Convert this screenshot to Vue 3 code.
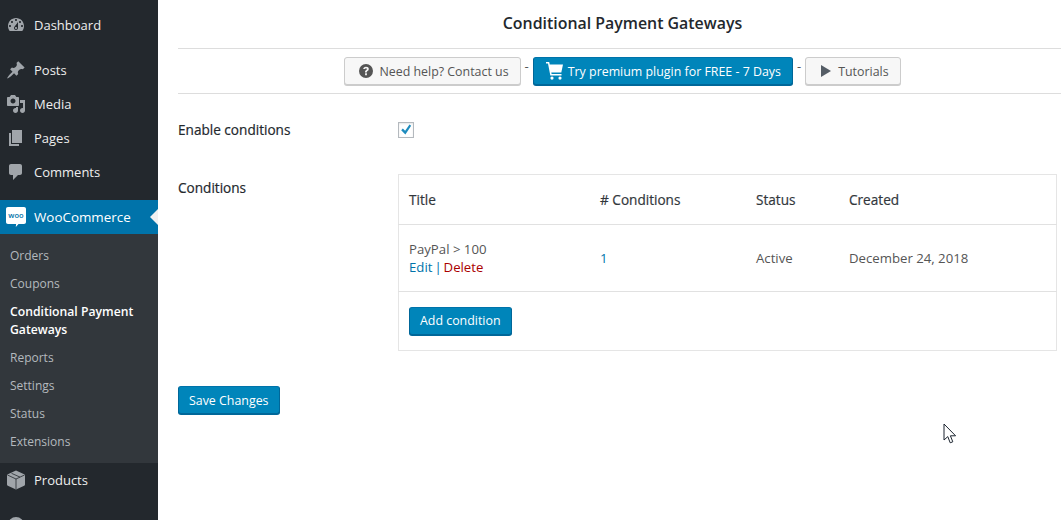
<script setup>
const menuTop = [
  { label: 'Dashboard', icon: 'dashboard', gap: true },
  { label: 'Posts', icon: 'pin' },
  { label: 'Media', icon: 'media' },
  { label: 'Pages', icon: 'pages' },
  { label: 'Comments', icon: 'comments', gap: true }
]

const icons = {
  dashboard: 'M3.76 16h12.48c1.1-1.37 1.76-3.11 1.76-5 0-4.42-3.58-8-8-8s-8 3.58-8 8c0 1.89.66 3.63 1.76 5zM10 4c.55 0 1 .45 1 1s-.45 1-1 1-1-.45-1-1 .45-1 1-1zM6 6c.55 0 1 .45 1 1s-.45 1-1 1-1-.45-1-1 .45-1 1-1zm8 0c.55 0 1 .45 1 1s-.45 1-1 1-1-.45-1-1 .45-1 1-1zm-5.37 5.55L12 7v6c0 1.1-.9 2-2 2s-2-.9-2-2c0-.57.24-1.08.63-1.45zM4 10c.55 0 1 .45 1 1s-.45 1-1 1-1-.45-1-1 .45-1 1-1zm12 0c.55 0 1 .45 1 1s-.45 1-1 1-1-.45-1-1 .45-1 1-1zm-5 3c0-.55-.45-1-1-1s-1 .45-1 1 .45 1 1 1 1-.45 1-1z',
  pin: 'M10.44 3.02l1.82-1.82 6.36 6.35-1.83 1.82c-1.05-.68-2.48-.57-3.41.36l-.75.75c-.92.93-1.04 2.35-.35 3.41l-1.83 1.82-2.41-2.41-2.8 2.79c-.42.42-3.38 2.71-3.8 2.29s1.86-3.39 2.28-3.81l2.79-2.79L4.1 9.36l1.83-1.82c1.05.69 2.48.57 3.4-.36l.75-.75c.93-.92 1.05-2.35.36-3.41z',
  media: 'M13 11V4c0-.55-.45-1-1-1h-1.67L9 1H5L3.67 3H2c-.55 0-1 .45-1 1v7c0 .55.45 1 1 1h10c.55 0 1-.45 1-1zM7 4.5c1.38 0 2.5 1.12 2.5 2.5S8.38 9.5 7 9.5 4.5 8.38 4.5 7 5.62 4.5 7 4.5zM14 6h5v10.5c0 1.38-1.12 2.5-2.5 2.5S14 17.88 14 16.5s1.12-2.5 2.5-2.5c.17 0 .34.02.5.05V9h-3V6zm-4 8.05V13h2v3.5c0 1.38-1.12 2.5-2.5 2.5S7 17.88 7 16.5 8.12 14 9.5 14c.17 0 .34.02.5.05z',
  pages: 'M6 15V2h10v13H6zm-1 1h8v2H3V5h2v11z',
  comments: 'M5 2h9c1.1 0 2 .9 2 2v7c0 1.1-.9 2-2 2h-2l-5 5v-5H5c-1.1 0-2-.9-2-2V4c0-1.1.9-2 2-2z',
  products: 'M10 0.500l8.200 3.800c.5.2.8.6.8 1.200v9c0 .6-.3 1-.8 1.200L10 19.500l-8.200-3.800c-.5-.2-.8-.6-.8-1.200v-9c0-.6.3-1 .8-1.200z'
}

const subMenu = [
  { label: 'Orders' },
  { label: 'Coupons' },
  { label: 'Conditional Payment Gateways', current: true },
  { label: 'Reports' },
  { label: 'Settings' },
  { label: 'Status' },
  { label: 'Extensions' }
]
</script>

<template>
  <div class="admin">
    <aside class="sidebar">
      <ul class="menu">
        <li v-for="item in menuTop" :key="item.label" class="menu-item" :class="{ gap: item.gap }">
          <svg class="menu-icon" viewBox="0 0 20 20"><path :d="icons[item.icon]" fill-rule="evenodd" /></svg>
          <span>{{ item.label }}</span>
        </li>
        <li class="menu-item active">
          <svg class="menu-icon" viewBox="0 0 20 20">
            <path d="M2 0h16c1.200 0 2 .8 2 2v13c0 1.200-.8 2-2 2h-5.500l-2.700 3 .3-3H2c-1.200 0-2-.8-2-2V2C0 .8.800 0 2 0z" fill="#fff" />
            <text x="10" y="11" class="woo-mark">woo</text>
          </svg>
          <span>WooCommerce</span>
        </li>
      </ul>
      <ul class="submenu">
        <li v-for="sub in subMenu" :key="sub.label" :class="{ current: sub.current }">{{ sub.label }}</li>
      </ul>
      <ul class="menu">
        <li class="menu-item gap">
          <svg class="menu-icon" viewBox="0 0 20 20">
            <path :d="icons.products" />
            <path d="M1.500 5l8.500 4 8.500-4M5.500 3.300l8.500 3.800M10 9v10" class="cube-lines" />
          </svg>
          <span>Products</span>
        </li>
        <li class="menu-item">
          <svg class="menu-icon" viewBox="0 0 20 20"><circle cx="10" cy="10" r="8" /></svg>
        </li>
      </ul>
    </aside>

    <main class="content">
      <h2 class="page-title">Conditional Payment Gateways</h2>
      <div class="toolbar">
        <a class="btn">
          <svg class="btn-icon" viewBox="0 0 16 16"><path fill-rule="evenodd" fill="#555" d="M8 1a7 7 0 1 1 0 14A7 7 0 0 1 8 1zm-.9 9.300v1.900h1.800v-1.900zM8 3.700c-1.600 0-2.700.9-2.800 2.400h1.800c.1-.6.4-.9 1-.9.500 0 .9.300.9.800 0 .4-.2.700-.7 1.100-.9.700-1.200 1.200-1.200 2.300v.1h1.800c0-.7.1-1 .8-1.500.8-.6 1.200-1.200 1.200-2.100 0-1.500-1.100-2.200-2.800-2.200z" /></svg>
          Need help? Contact us
        </a>
        <span class="dash">-</span>
        <a class="btn primary">
          <svg class="cart" viewBox="0 0 18 18"><path fill="#fff" d="M1 0h3.200l.5 2.500H18l-1.700 8H6.300l.3 1.500h9.900v1.600H5.300L3 1.600H1zM7 14.500a1.600 1.600 0 1 1 0 3.200 1.600 1.600 0 0 1 0-3.200zm8 0a1.600 1.600 0 1 1 0 3.200 1.600 1.600 0 0 1 0-3.200z" /></svg>
          Try premium plugin for FREE - 7 Days
        </a>
        <span class="dash">-</span>
        <a class="btn">
          <svg class="btn-icon play" viewBox="0 0 12 14"><path fill="#555d66" d="M1 1l10 6-10 6z" /></svg>
          Tutorials
        </a>
      </div>

      <div class="form-row enable-row">
        <label class="row-label">Enable conditions</label>
        <span class="checkbox">
          <svg viewBox="0 0 16 16"><path fill="#1e8cbe" d="M2.500 8.200l1.900-1.900 2.600 2.500 5-7 1.900 1.400-6.600 9.800z" /></svg>
        </span>
      </div>

      <div class="form-row conditions-row">
        <label class="row-label">Conditions</label>
        <table class="conditions">
          <thead>
            <tr>
              <th class="col-title">Title</th>
              <th class="col-count"># Conditions</th>
              <th class="col-status">Status</th>
              <th>Created</th>
            </tr>
          </thead>
          <tbody>
            <tr>
              <td>
                <div>PayPal &gt; 100</div>
                <div class="row-actions"><a class="link">Edit</a> <span class="link">|</span> <a class="delete">Delete</a></div>
              </td>
              <td class="link">1</td>
              <td>Active</td>
              <td>December 24, 2018</td>
            </tr>
          </tbody>
          <tfoot>
            <tr>
              <td colspan="4"><a class="btn primary">Add condition</a></td>
            </tr>
          </tfoot>
        </table>
      </div>

      <a class="btn primary save">Save Changes</a>
    </main>

    <svg class="cursor" viewBox="0 0 14 21" width="14" height="21">
      <path d="M1 1V17L4.800 13.600 7.200 19.800 9.800 18.800 7.400 12.800H12.600Z" fill="#fff" stroke="#1c2530" stroke-width="1" />
    </svg>
  </div>
</template>

<style>
html, body {
  margin: 0;
  background: #fff;
  overflow: hidden;
}
</style>

<style scoped>
.admin {
  display: flex;
  width: 1061px;
  height: 520px;
  overflow: hidden;
  position: relative;
  font-family: "Open Sans", "Liberation Sans", sans-serif;
  font-size: 13px;
  color: #444;
}

ul {
  list-style: none;
  margin: 0;
  padding: 0;
}

.sidebar {
  flex: 0 0 158px;
  background: #23282d;
  padding-top: 8px;
}

.menu-item {
  height: 34px;
  display: flex;
  align-items: center;
  color: #eee;
  position: relative;
}

.menu-item.gap {
  margin-bottom: 11px;
}

.menu-icon {
  flex: 0 0 20px;
  height: 20px;
  margin: 0 8px 0 6px;
  fill: #a0a5aa;
  overflow: visible;
}

.menu-item.active {
  background: #0073aa;
  color: #fff;
  font-size: 13.400px;
}

.menu-item.active::after {
  content: "";
  position: absolute;
  right: 0;
  top: 9px;
  border: 8px solid transparent;
  border-right-color: #f1f1f1;
  border-left-width: 0;
}

.woo-mark {
  font-size: 7.500px;
  font-weight: 600;
  fill: #0073aa;
  text-anchor: middle;
}

.cube-lines {
  fill: none;
  stroke: #23282d;
  stroke-width: 0.800;
}

.submenu {
  background: #32373c;
  padding: 8px 0 7px;
  color: #b4b9be;
  font-size: 12px;
}

.submenu li {
  padding: 5px 12px 5px 10px;
  line-height: 18px;
}

.submenu .current {
  color: #fff;
  font-size: 12.200px;
  font-weight: 600;
}

.content {
  flex: 1;
  min-width: 0;
  margin-right: -6px;
  padding-left: 20px;
}

.page-title {
  margin: 0;
  height: 48px;
  line-height: 46px;
  font-size: 15.900px;
  font-weight: 600;
  color: #23282d;
  text-align: center;
  border-bottom: 1px solid #ddd;
}

.toolbar {
  display: flex;
  justify-content: center;
  align-items: flex-start;
  gap: 4px;
  height: 36px;
  padding-top: 8px;
  border-bottom: 1px solid #ddd;
}

.dash {
  line-height: 18px;
  color: #555;
}

.btn {
  display: inline-flex;
  align-items: center;
  box-sizing: border-box;
  height: 28px;
  padding: 0 11px;
  background: #f7f7f7;
  border: 1px solid #ccc;
  border-radius: 3px;
  box-shadow: 0 1px 0 #ccc;
  color: #555;
  font-size: 12.400px;
}

.btn-icon {
  width: 16px;
  height: 16px;
  margin: 0 5px 0 2px;
}

.play {
  width: 12px;
  height: 14px;
  margin: 0 6px 0 3px;
}

.cart {
  width: 18px;
  height: 18px;
  margin-right: 5px;
}

.primary {
  padding: 0 10px;
  background: #0085ba;
  border-color: #0073aa #006799 #006799;
  box-shadow: 0 1px 0 #006799;
  color: #fff;
}

.toolbar .primary {
  padding: 0 11px;
}

.form-row {
  display: flex;
  align-items: flex-start;
}

.row-label {
  flex: 0 0 220px;
  font-size: 13.600px;
  -webkit-text-stroke: 0.200px currentColor;
  color: #23282d;
  line-height: 20px;
}

.enable-row {
  padding-top: 26px;
  height: 54px;
}

.checkbox {
  width: 16px;
  height: 16px;
  box-sizing: border-box;
  margin-top: 2px;
  border: 1px solid #b4b9be;
  background: #fff;
  box-shadow: inset 0 1px 2px rgba(0, 0, 0, 0.1);
}

.checkbox svg {
  display: block;
  width: 14px;
  height: 14px;
}

.conditions-row .row-label {
  margin-top: 4px;
}

.conditions {
  width: 659px;
  border: 1px solid #e5e5e5;
  border-collapse: collapse;
  color: #555;
  font-size: 13.200px;
  table-layout: fixed;
}

.conditions th {
  height: 49px;
  padding: 0 10px;
  text-align: left;
  font-size: 13.600px;
  font-weight: 400;
  -webkit-text-stroke: 0.200px currentColor;
  color: #32373c;
  border-bottom: 1px solid #e1e1e1;
}

.conditions td {
  padding: 0 10px;
  line-height: 18px;
}

.conditions tbody td {
  height: 66px;
  border-bottom: 1px solid #e1e1e1;
}

.conditions tfoot td {
  height: 58px;
}

.col-title {
  width: 171px;
}

.col-count {
  width: 136px;
}

.col-status {
  width: 73px;
}

.row-actions {
  word-spacing: -1.500px;
}

.link {
  color: #0073aa;
}

.delete {
  color: #a00;
}

.save {
  margin-top: 35px;
}

.cursor {
  position: absolute;
  left: 943px;
  top: 423px;
}
</style>
